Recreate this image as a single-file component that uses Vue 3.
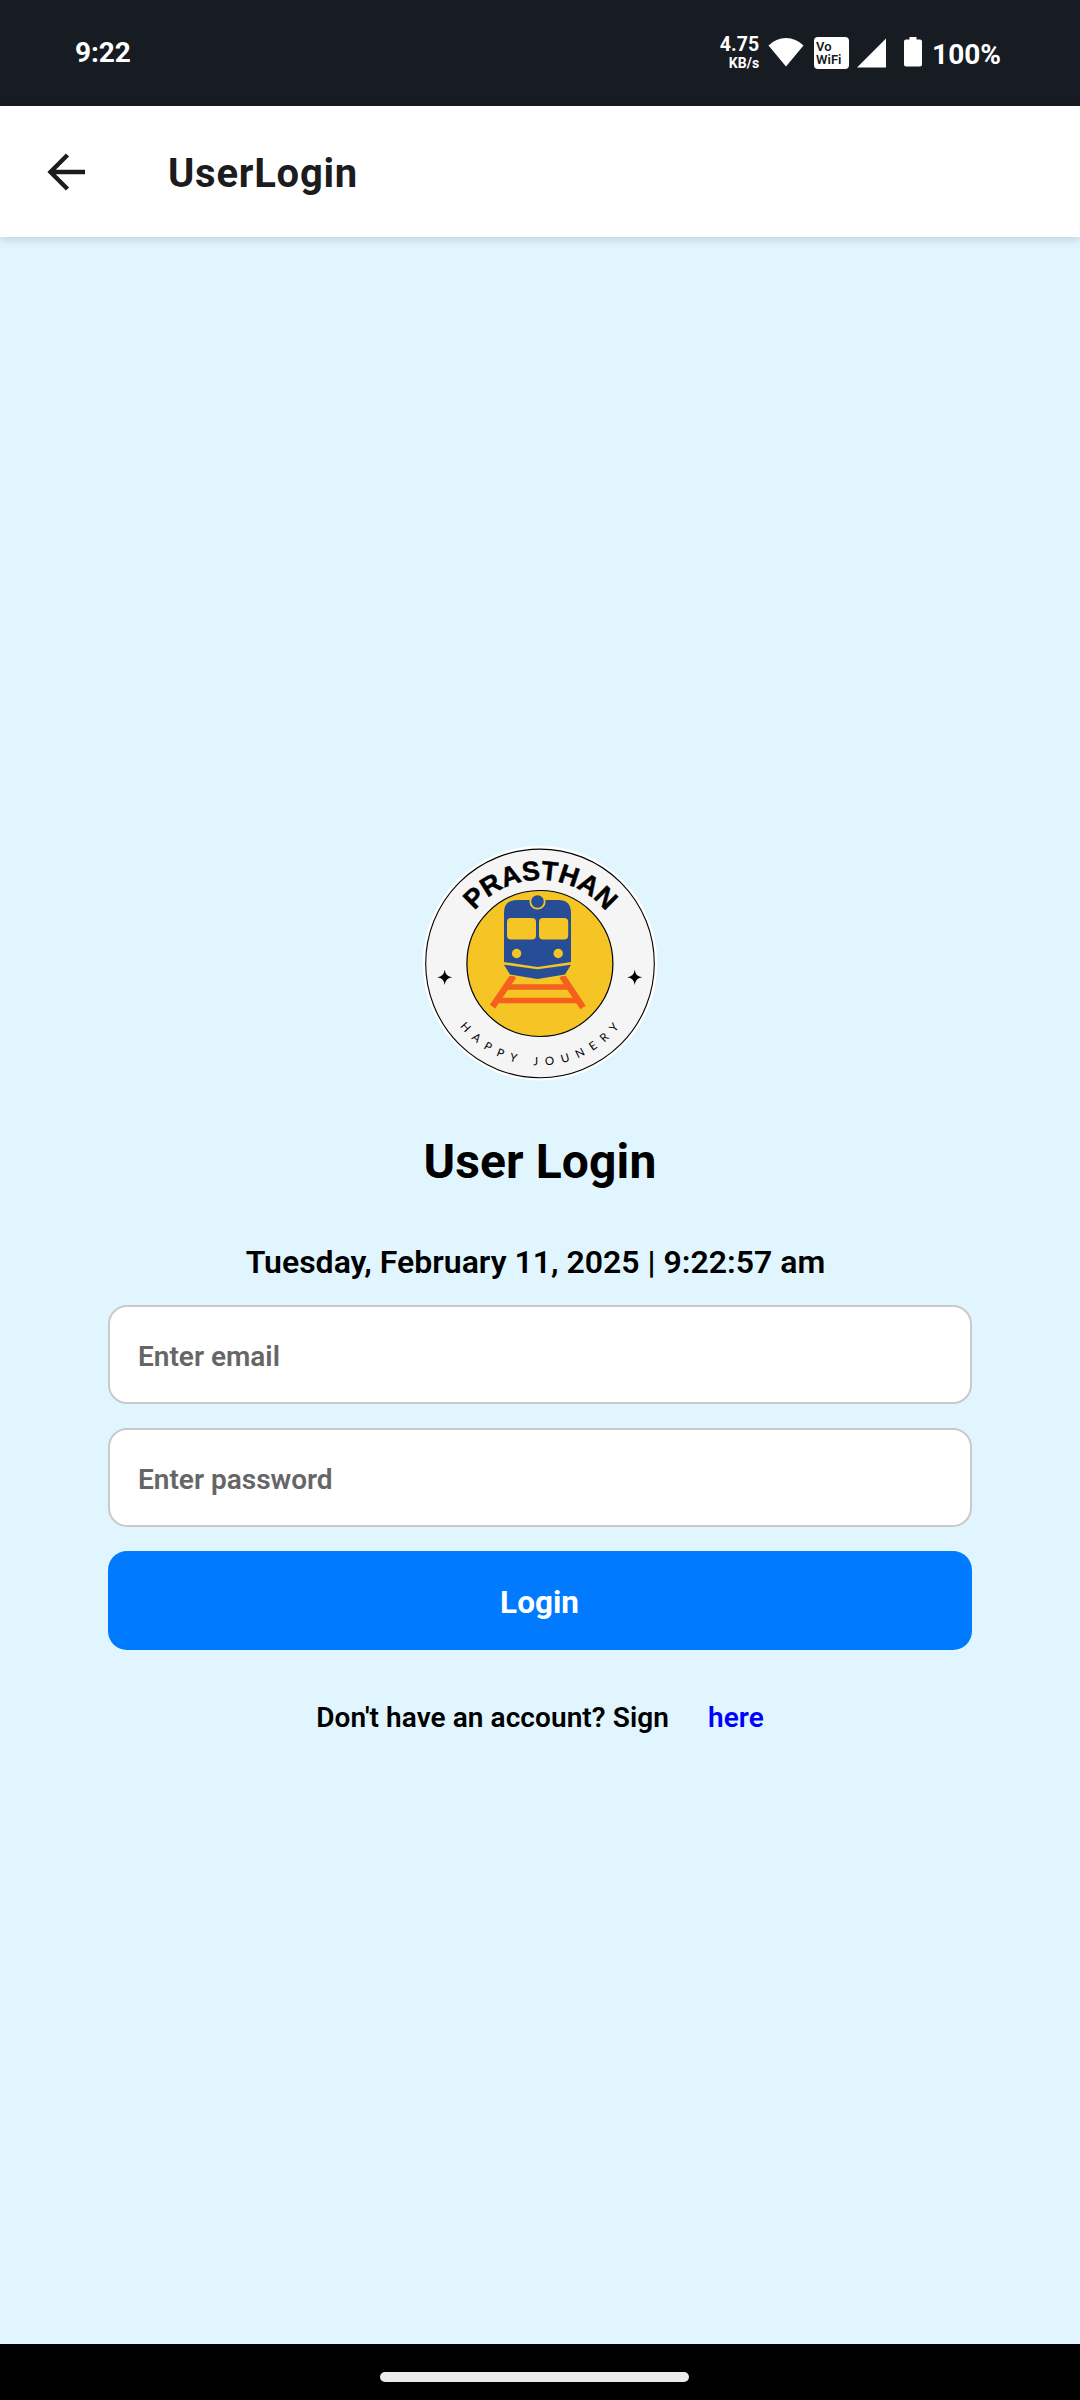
<script setup>
import { ref } from 'vue'

const email = ref('')
const password = ref('')
</script>

<template>
  <div class="screen">
    <header class="status">
      <span class="clock">9:22</span>
      <div class="indicators">
        <div class="speed">
          <span class="rate">4.75</span>
          <span class="unit">KB/s</span>
        </div>
        <svg class="wifi" width="36" height="30" viewBox="0 0 36 30"><path d="M.5 8.5Q8 1 18 1T35.500 8.500L18 29.500Z" fill="#fff" /></svg>
        <div class="vowifi"><span>Vo</span><span>WiFi</span></div>
        <svg class="signal" width="30" height="30" viewBox="0 0 30 30"><path d="M29 .5V29.500H0Z" fill="#fff" /></svg>
        <svg class="battery" width="18" height="31" viewBox="0 0 18 31"><path d="M5.500 1H12.500V3.500H16Q18 3.500 18 5.500V28.500Q18 30.500 16 30.500H2Q0 30.500 0 28.500V5.500Q0 3.500 2 3.500H5.500Z" fill="#fff" /></svg>
        <span class="percent">100%</span>
      </div>
    </header>

    <nav class="appbar">
      <svg class="back" width="40" height="40" viewBox="0 0 40 40"><path d="M38 20H4M20.500 3L3.500 20L20.500 37" fill="none" stroke="#1c1c1e" stroke-width="4.400" /></svg>
      <h1>UserLogin</h1>
    </nav>

    <main class="content">
      <svg class="logo" width="250" height="250" viewBox="0 0 250 250">
        <defs>
          <path id="arc-top" d="M40.500 124.500A84.500 84.500 0 0 1 209.500 124.500" />
          <path id="arc-bottom" d="M23.200 123.500A101.800 101.800 0 0 0 226.800 123.500" />
        </defs>
        <circle cx="125" cy="123.300" r="117.300" fill="#fff" />
        <circle cx="125" cy="123.400" r="114.300" fill="#f5f5f5" stroke="#000" stroke-width="1.100" />
        <circle cx="124.900" cy="123.500" r="73" fill="#f5c526" stroke="#000" stroke-width="1.200" />
        <text class="brand" text-anchor="middle"><textPath href="#arc-top" startOffset="50.200%">PRASTHAN</textPath></text>
        <text class="motto" text-anchor="middle"><textPath href="#arc-bottom" startOffset="51%">HAPPY JOUNERY</textPath></text>
        <g fill="#000">
          <path d="M29.700 129.700Q30.500 136.500 37.200 137.300Q30.500 138.100 29.700 145Q28.900 138.100 22.200 137.300Q28.900 136.500 29.700 129.700Z" />
          <path d="M219.700 129.700Q220.500 136.500 227.200 137.300Q220.500 138.100 219.700 145Q218.900 138.100 212.200 137.300Q218.900 136.500 219.700 129.700Z" />
        </g>
        <g stroke="#f5601d" fill="none">
          <path d="M98.500 136L77.500 166.700M147 136L168 167.500" stroke-width="6.500" />
          <path d="M92 147H154M83 160.500H163" stroke-width="5.600" />
        </g>
        <path d="M86 134H160V136H86Z" fill="#f5c526" />
        <path d="M89 73Q89 60 102 60H143Q156 60 156 73V122L122.500 127L89 122Z" fill="#264d95" />
        <path d="M89 124.700L122.500 129.300L156 124.700L150 134.500L122.500 139L95 134.500Z" fill="#264d95" />
        <circle cx="122.500" cy="61.500" r="7.200" fill="#264d95" stroke="#f5c526" stroke-width="1.800" />
        <g fill="#f5c526">
          <rect x="92" y="78" width="29" height="21.500" rx="4" />
          <rect x="124" y="78" width="29.200" height="21.500" rx="4" />
          <circle cx="101.600" cy="113.500" r="4.700" />
          <circle cx="143.200" cy="113.500" r="4.700" />
        </g>
      </svg>

      <h2>User Login</h2>
      <p class="date">Tuesday, February 11, 2025 | 9:22:57 am</p>
      <form class="form" @submit.prevent>
        <input v-model="email" type="email" placeholder="Enter email" />
        <input v-model="password" type="password" placeholder="Enter password" />
        <button type="submit">Login</button>
      </form>
      <p class="signup"><span>Don't have an account? Sign</span><a>here</a></p>
    </main>

    <footer class="gesture"><i></i></footer>
  </div>
</template>

<style>
body { margin: 0; }
</style>

<style scoped>
.screen {
  width: 1080px;
  height: 2400px;
  display: flex;
  flex-direction: column;
  overflow: hidden;
  background: #e1f5fe;
  font-family: Roboto, sans-serif;
  font-weight: 600;
  color: #000;
}
h1, h2, p { margin: 0; white-space: nowrap; }
svg { display: block; flex: none; }

.status {
  height: 106px;
  flex: none;
  box-sizing: border-box;
  padding: 0 79px 0 75px;
  display: flex;
  justify-content: space-between;
  background: #171b22;
  color: #fff;
}
.clock { font-size: 28px; line-height: 34px; margin-top: 36px; font-weight: 700; letter-spacing: -.1px; }
.indicators { display: flex; align-items: flex-start; }
.speed { display: flex; flex-direction: column; align-items: flex-end; margin: 35px 9px 0 0; }
.rate { font-size: 19.500px; line-height: 20px; font-weight: 700; }
.unit { font-size: 14px; line-height: 16px; font-weight: 700; }
.wifi { margin: 37px 10px 0 0; }
.vowifi {
  width: 35px;
  height: 32px;
  margin: 37px 8px 0 0;
  box-sizing: border-box;
  padding: 3px 0 0 2px;
  display: flex;
  flex-direction: column;
  background: #fff;
  border-radius: 4px;
  color: #171b22;
  font-size: 13px;
  line-height: 13px;
}
.signal { margin: 38px 17px 0 0; }
.battery { margin: 36px 10px 0 0; }
.percent { font-size: 28px; line-height: 34px; margin-top: 38px; font-weight: 700; }

.appbar {
  position: relative;
  height: 131px;
  flex: none;
  box-sizing: border-box;
  padding-left: 47px;
  display: flex;
  align-items: center;
  background: #fff;
  box-shadow: 0 2px 9px rgba(0, 0, 0, .17);
}
.appbar h1 { margin: 4px 0 0 81px; font-size: 40px; line-height: 48px; font-weight: 700; letter-spacing: .75px; color: #1c1c1e; }

.content { flex: 1; display: flex; flex-direction: column; align-items: center; padding-top: 603px; }
.brand { font: 700 27px "Liberation Sans", Arial, sans-serif; stroke: #000; stroke-width: .5px; }
.motto { font: 400 11.500px Lato, sans-serif; letter-spacing: 7.600px; }
h2 { margin-top: 44px; font-size: 48px; line-height: 56px; font-weight: 700; letter-spacing: .1px; }
.date { margin: 53px 9px 0 0; font-size: 32px; line-height: 38px; }
.form { width: 864px; margin-top: 24px; display: flex; flex-direction: column; gap: 24px; }
input {
  box-sizing: border-box;
  height: 99px;
  padding: 4px 28px 0;
  border: 2px solid #c9c9c9;
  border-radius: 19px;
  background: #fff;
  font: 600 28px Roboto, sans-serif;
}
input::placeholder { color: #666; opacity: 1; }
button {
  height: 99px;
  padding: 3px 1px 0 0;
  border: 0;
  border-radius: 19px;
  background: #007bff;
  color: #fff;
  font: 700 31.500px Roboto, sans-serif;
}
.signup { margin-top: 51px; display: flex; gap: 39px; font-size: 28px; line-height: 34px; letter-spacing: .07px; }
.signup a { color: #00f; }

.gesture { height: 56px; flex: none; background: #000; display: flex; align-items: flex-start; }
.gesture i { width: 309px; height: 10px; margin: 28px 0 0 380px; border-radius: 5px; background: #ebebeb; }
</style>
